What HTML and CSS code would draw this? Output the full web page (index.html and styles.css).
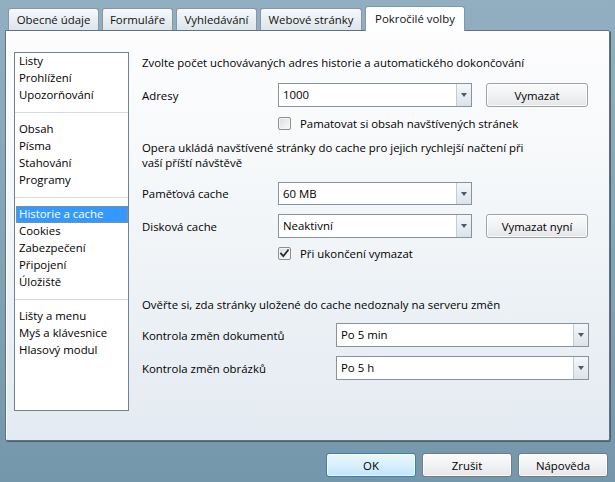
FILE: index.html
```
<!DOCTYPE html>
<html lang="cs">
<head>
<meta charset="utf-8">
<link rel="stylesheet" href="styles.css">
</head>
<body>
<div class="window">
  <div class="tabs">
    <div class="tab t1">Obecné údaje</div>
    <div class="tab t2">Formuláře</div>
    <div class="tab t3">Vyhledávání</div>
    <div class="tab t4">Webové stránky</div>
    <div class="tab active t5">Pokročilé volby</div>
  </div>
  <div class="panel">
    <div class="list">
      <div class="group">
        <div class="item">Listy</div>
        <div class="item">Prohlížení</div>
        <div class="item">Upozorňování</div>
      </div>
      <div class="sep"></div>
      <div class="group">
        <div class="item">Obsah</div>
        <div class="item">Písma</div>
        <div class="item">Stahování</div>
        <div class="item">Programy</div>
      </div>
      <div class="sep"></div>
      <div class="group">
        <div class="item selected">Historie a cache</div>
        <div class="item">Cookies</div>
        <div class="item">Zabezpečení</div>
        <div class="item">Připojení</div>
        <div class="item">Úložiště</div>
      </div>
      <div class="sep"></div>
      <div class="group">
        <div class="item">Lišty a menu</div>
        <div class="item">Myš a klávesnice</div>
        <div class="item">Hlasový modul</div>
      </div>
    </div>
    <div class="content">
      <div class="text head">Zvolte počet uchovávaných adres historie a automatického dokončování</div>
      <div class="row r-adresy">
        <div class="label">Adresy</div>
        <div class="combo narrow"><span class="value">1000</span><span class="drop"><span class="arrow"></span></span></div>
        <div class="btn small">Vymazat</div>
      </div>
      <div class="check-row r-pamatovat">
        <span class="checkbox"></span>
        <span class="check-label">Pamatovat si obsah navštívených stránek</span>
      </div>
      <div class="text para">Opera ukládá navštívené stránky do cache pro jejich rychlejší načtení při<br>vaší příští návštěvě</div>
      <div class="row r-pamet">
        <div class="label">Paměťová cache</div>
        <div class="combo narrow"><span class="value">60 MB</span><span class="drop"><span class="arrow"></span></span></div>
      </div>
      <div class="row r-disk">
        <div class="label">Disková cache</div>
        <div class="combo narrow"><span class="value">Neaktivní</span><span class="drop"><span class="arrow"></span></span></div>
        <div class="btn small">Vymazat nyní</div>
      </div>
      <div class="check-row r-ukonceni">
        <span class="checkbox checked"><svg viewBox="0 0 13 13" width="13" height="13"><path d="M3 6.5 L5.3 9.2 L10 3.2" fill="none" stroke="#1f2a36" stroke-width="1.8" stroke-linecap="square"/></svg></span>
        <span class="check-label">Při ukončení vymazat</span>
      </div>
      <div class="text head2">Ověřte si, zda stránky uložené do cache nedoznaly na serveru změn</div>
      <div class="row r-dok">
        <div class="label wide">Kontrola změn dokumentů</div>
        <div class="combo long"><span class="value">Po 5 min</span><span class="drop"><span class="arrow"></span></span></div>
      </div>
      <div class="row r-obr">
        <div class="label wide">Kontrola změn obrázků</div>
        <div class="combo long"><span class="value">Po 5 h</span><span class="drop"><span class="arrow"></span></span></div>
      </div>
    </div>
  </div>
  <div class="footer">
    <div class="btn dlg default">OK</div>
    <div class="btn dlg">Zrušit</div>
    <div class="btn dlg">Nápověda</div>
  </div>
</div>
</body>
</html>
```
FILE: styles.css
```
* { box-sizing: border-box; }
html, body { margin: 0; padding: 0; }
body {
  width: 615px;
  height: 482px;
  overflow: hidden;
  font-family: "Open Sans", "Noto Sans", sans-serif;
  font-size: 11.4px;
  color: #000;
  background: linear-gradient(#92afc2, #7597ab);
}
.window {
  display: flex;
  flex-direction: column;
  height: 482px;
}

/* tabs */
.tabs {
  display: flex;
  align-items: flex-end;
  gap: 3px;
  height: 30px;
  padding-left: 8px;
}
.tab {
  height: 22px;
  line-height: 21px;
  text-align: center;
  border: 1px solid #8597a6;
  border-bottom: none;
  border-radius: 3px 3px 0 0;
  background: linear-gradient(#f7f9fb, #dce4ea);
  color: #111;
  white-space: nowrap;
}
.t1 { width: 91px; }
.t2 { width: 71px; }
.t3 { width: 81px; }
.t4 { width: 102px; }
.t5 { width: 100px; }
.tab.active {
  height: 25px;
  line-height: 24px;
  margin-bottom: -1px;
  background: #fdfeff;
  position: relative;
  z-index: 2;
}

/* panel */
.panel {
  position: relative;
  margin: 0 5px 0 5px;
  height: 411px;
  display: flex;
  gap: 13px;
  padding: 21px 0 0 8px;
  border: 1px solid #5f7382;
  border-radius: 0 2px 2px 2px;
  box-shadow: inset 1px 1px 0 #ffffff, 1px 1px 0 #4d5f6c;
  background: linear-gradient(#fdfdfe, #f4f7f9 40%, #e3eaf1);
}

/* list */
.list {
  width: 115px;
  height: 359px;
  border: 1px solid #6e8494;
  background: #fff;
  color: #000;
}
.item {
  height: 17px;
  line-height: 16px;
  padding-left: 3px;
  margin: 0 0 0 1px;
  white-space: nowrap;
}
.item.selected {
  background: #3399ff;
  color: #fff;
  border: 1px dotted #c0894a;
  line-height: 14px;
  padding-left: 2px;
}
.sep {
  height: 1px;
  background: #d9dcdf;
  margin: 8px 0;
}

/* content */
.content {
  display: flex;
  flex-direction: column;
  width: 448px;
}
.text { line-height: 15px; white-space: nowrap; }
.head { margin-top: 3px; }
.row {
  display: flex;
  align-items: center;
  height: 24px;
}
.r-adresy { margin-top: 13px; }
.r-pamet { margin-top: 12px; height: 23px; }
.r-disk { margin-top: 9px; }
.r-dok { margin-top: 11px; }
.r-obr { margin-top: 9px; }
.para { margin-top: 9px; }
.head2 { margin-top: 36px; }
.label { width: 136px; flex: none; }
.label.wide { width: 194px; }

.combo {
  display: flex;
  height: 100%;
  border: 1px solid #8793a0;
  background: #fff;
}
.combo.narrow { width: 194px; }
.combo.long { width: 253px; }
.value {
  flex: 1;
  padding-left: 4px;
  line-height: 21px;
  color: #000;
}
.drop {
  width: 15px;
  display: flex;
  align-items: center;
  justify-content: center;
  border-left: 1px solid #c3ccd4;
  background: linear-gradient(#f4f7fa, #dbe3ea);
}
.arrow {
  width: 0;
  height: 0;
  border-left: 3.5px solid transparent;
  border-right: 3.5px solid transparent;
  border-top: 4px solid #4c5966;
}

.btn {
  display: flex;
  align-items: center;
  justify-content: center;
  height: 24px;
  border: 1px solid #9da3a9;
  border-radius: 3px;
  background: linear-gradient(#fbfbfb, #f1f2f3 50%, #e4e6e8);
  box-shadow: inset 0 0 0 1px rgba(255,255,255,0.8);
  color: #000;
}
.btn.small { width: 102px; margin-left: 14px; }

.check-row {
  display: flex;
  align-items: center;
  height: 16px;
  padding-left: 136px;
  gap: 9px;
}
.r-pamatovat { margin-top: 8px; }
.r-ukonceni { margin-top: 7px; }
.checkbox {
  width: 13px;
  height: 13px;
  flex: none;
  border: 1px solid #8e8f8f;
  border-radius: 2px;
  background: linear-gradient(135deg, #dcdcdc, #fbfbfb);
  box-shadow: inset 0 0 0 1px #f4f4f4;
  position: relative;
}
.checkbox svg { position: absolute; left: -1px; top: -1px; }

/* footer */
.footer {
  display: flex;
  justify-content: flex-end;
  gap: 6px;
  padding: 12px 7px 0 0;
}
.btn.dlg { width: 90px; border-color: #707c86; }
.btn.default {
  border-color: #3c7fb1;
  background: linear-gradient(#eaf6fd, #d9f0fc 50%, #bee6fd);
  box-shadow: inset 0 0 0 1px rgba(255,255,255,0.7);
}
```
